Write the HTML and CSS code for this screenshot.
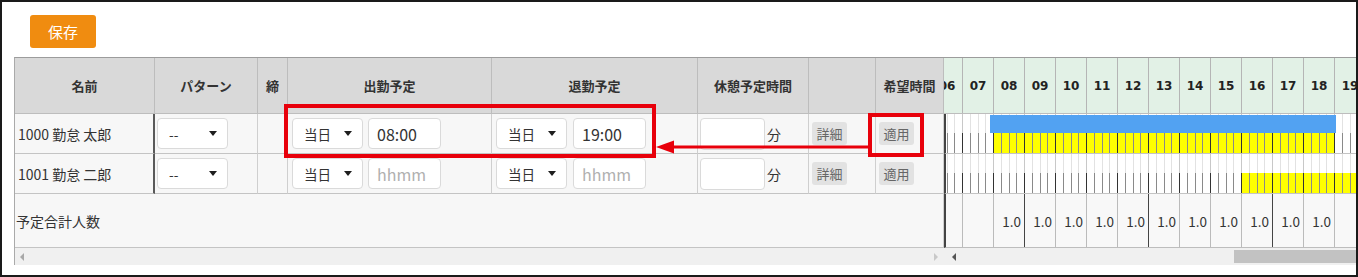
FILE: index.html
```html
<!DOCTYPE html>
<html lang="ja">
<head>
  <meta charset="UTF-8">
  <title>勤務予定</title>
  <link rel="stylesheet" href="styles.css">
</head>
<body>
  <div class="frame">
    <div class="toolbar">
      <button class="save">保存</button>
    </div>

    <div class="sheet">
      <!-- 左側：社員ごとの入力欄 -->
      <div class="lpane">
        <div class="grid">
          <div class="th">名前</div>
          <div class="th">パターン</div>
          <div class="th">締</div>
          <div class="th">出勤予定</div>
          <div class="th">退勤予定</div>
          <div class="th">休憩予定時間</div>
          <div class="th"></div>
          <div class="th">希望時間</div>

          <div class="td name">1000 勤怠 太郎</div>
          <div class="td pat"><span class="sel"><select><option>--</option></select></span></div>
          <div class="td"></div>
          <div class="td tm"><span class="sel"><select><option>当日</option></select></span><input class="inp" value="08:00"></div>
          <div class="td tm out"><span class="sel"><select><option>当日</option></select></span><input class="inp" value="19:00"></div>
          <div class="td rest"><input class="inp short"><span class="unit">分</span></div>
          <div class="td btns"><button class="mini">詳細</button></div>
          <div class="td btns"><button class="mini">適用</button></div>

          <div class="td name">1001 勤怠 二郎</div>
          <div class="td pat"><span class="sel"><select><option>--</option></select></span></div>
          <div class="td"></div>
          <div class="td tm"><span class="sel"><select><option>当日</option></select></span><input class="inp" placeholder="hhmm"></div>
          <div class="td tm out"><span class="sel"><select><option>当日</option></select></span><input class="inp" placeholder="hhmm"></div>
          <div class="td rest"><input class="inp short"><span class="unit">分</span></div>
          <div class="td btns"><button class="mini">詳細</button></div>
          <div class="td btns"><button class="mini">適用</button></div>

          <div class="td total">予定合計人数</div>
        </div>
        <div class="hscroll">
          <span class="arr left"></span>
          <span class="arr right"></span>
        </div>
      </div>

      <!-- 右側：タイムライン -->
      <div class="rpane">
        <div class="ghead">
          <div class="track">
            <div class="h">06</div><div class="h">07</div><div class="h">08</div><div class="h">09</div>
            <div class="h">10</div><div class="h">11</div><div class="h">12</div><div class="h">13</div>
            <div class="h">14</div><div class="h">15</div><div class="h">16</div><div class="h">17</div>
            <div class="h">18</div><div class="h">19</div>
          </div>
        </div>

        <div class="grow">
          <div class="plan"><div class="bar" style="margin-left:59px;width:346px"></div></div>
          <div class="slots">
            <div class="s"></div><div class="s"></div><div class="s on"></div><div class="s on"></div>
            <div class="s on"></div><div class="s on"></div><div class="s on"></div><div class="s on"></div>
            <div class="s on"></div><div class="s on"></div><div class="s on"></div><div class="s on"></div>
            <div class="s on"></div><div class="s"></div><div class="s"></div>
          </div>
        </div>

        <div class="grow">
          <div class="plan"></div>
          <div class="slots">
            <div class="s"></div><div class="s"></div><div class="s"></div><div class="s"></div>
            <div class="s"></div><div class="s"></div><div class="s"></div><div class="s"></div>
            <div class="s"></div><div class="s"></div><div class="s on"></div><div class="s on"></div>
            <div class="s on"></div><div class="s on"></div><div class="s on"></div>
          </div>
        </div>

        <div class="gtotal">
          <div class="track">
            <div class="c"></div><div class="c"></div><div class="c">1.0</div><div class="c major">1.0</div>
            <div class="c">1.0</div><div class="c">1.0</div><div class="c">1.0</div><div class="c major">1.0</div>
            <div class="c">1.0</div><div class="c">1.0</div><div class="c">1.0</div><div class="c major">1.0</div>
            <div class="c">1.0</div><div class="c"></div><div class="c"></div>
          </div>
        </div>

        <div class="hscroll">
          <span class="arr left dark"></span>
          <span class="thumb"></span>
        </div>
      </div>
    </div>

    <!-- 説明用の赤枠と矢印 -->
    <svg class="note" width="1358" height="277" viewBox="0 0 1358 277">
      <rect x="286" y="106" width="368" height="50" fill="none" stroke="#e8000b" stroke-width="4"/>
      <rect x="870" y="115" width="52" height="40" fill="none" stroke="#e8000b" stroke-width="4"/>
      <line x1="670" y1="147" x2="868" y2="147" stroke="#e8000b" stroke-width="3"/>
      <polygon points="656,147 674,140.5 674,153.5" fill="#e8000b"/>
    </svg>
  </div>
</body>
</html>
```

FILE: styles.css
```css
* {
  box-sizing: border-box;
  margin: 0;
  padding: 0;
}

body {
  background-color: #fff;
  font-family: "Noto Sans CJK JP", "Noto Sans", sans-serif;
  font-size: 13px;
  color: #333;
}

.frame {
  position: relative;
  width: 1358px;
  height: 277px;
  border: 2px solid #1a1a1a;
  overflow: hidden;
}

.toolbar {
  height: 55px;
  padding: 13px 0 0 28px;
}

.save {
  display: block;
  width: 66px;
  height: 33px;
  border: 0;
  border-radius: 3px;
  background-color: #f08c10;
  color: #fff;
  font-family: "Noto Sans CJK JP", sans-serif;
  font-size: 15px;
}

.sheet {
  display: flex;
  margin-left: 12px;
  border-top: 1px solid #9c9c9c;
  border-left: 1px solid #aaa;
}

/* 左側 */
.lpane {
  flex: none;
  width: 929px;
}

.grid {
  display: grid;
  grid-template-columns: 140px 103px 30px 204px 206px 111px 67px 68px;
  grid-template-rows: 56px 40px 40px 54px;
}

.th {
  display: flex;
  align-items: center;
  justify-content: center;
  background-color: #d9d9d9;
  border-right: 1px solid #bdbdbd;
  border-bottom: 1px solid #bdbdbd;
  font-weight: bold;
  color: #333;
}

.td {
  display: flex;
  align-items: center;
  background-color: #f7f7f7;
  border-right: 1px solid #cfcfcf;
  border-bottom: 1px solid #c4c4c4;
  font-size: 14px;
}

.td.name {
  padding-left: 3px;
  border-right: 2px solid #5a5a5a;
}

.td.pat {
  padding-left: 2px;
}

.td.tm {
  padding-left: 4px;
  gap: 5px;
}

.td.tm.out {
  gap: 6px;
}

.td.rest {
  padding-left: 2px;
  gap: 2px;
}

.td.btns {
  padding-left: 3px;
}

.td.total {
  grid-column: 1 / -1;
  padding-left: 1px;
}

.sel {
  position: relative;
  display: inline-block;
}

.sel select {
  appearance: none;
  -webkit-appearance: none;
  display: block;
  width: 71px;
  height: 31px;
  padding-left: 11px;
  border: 1px solid #dadada;
  border-radius: 4px;
  background-color: #fff;
  font-family: "Noto Sans CJK JP", sans-serif;
  font-size: 13.5px;
  color: #333;
}

.sel::after {
  content: "";
  position: absolute;
  right: 11px;
  top: 13px;
  border-left: 4px solid transparent;
  border-right: 4px solid transparent;
  border-top: 5px solid #1e1e1e;
}

.inp {
  display: block;
  width: 73px;
  height: 31px;
  padding-left: 8px;
  border: 1px solid #dadada;
  border-radius: 4px;
  background-color: #fff;
  font-family: "Noto Sans CJK JP", sans-serif;
  font-size: 16px;
  color: #333;
}

.inp::placeholder {
  color: #b0b0b0;
}

.inp.short {
  width: 65px;
  height: 32px;
}

.mini {
  width: 35px;
  height: 23px;
  padding: 0;
  border: 0;
  border-radius: 3px;
  background-color: #e2e2e2;
  color: #666;
  font-family: "Noto Sans CJK JP", sans-serif;
  font-size: 13px;
  text-align: center;
}

.hscroll {
  display: flex;
  align-items: center;
  height: 17px;
  background-color: #f0f0f0;
}

.arr {
  width: 0;
  height: 0;
  border-top: 4px solid transparent;
  border-bottom: 4px solid transparent;
}

.arr.left {
  margin-left: 5px;
  border-right: 4px solid #a8a8a8;
}

.arr.right {
  margin-left: auto;
  margin-right: 6px;
  border-left: 4px solid #c8c8c8;
}

.arr.left.dark {
  margin-left: 8px;
  border-right-color: #555;
}

.thumb {
  margin-left: auto;
  width: 124px;
  height: 13px;
  margin-right: -2px;
  background-color: #c2c2c2;
}

/* 右側タイムライン：1時間 = 31px */
.rpane {
  flex: 1;
  min-width: 0;
  overflow: hidden;
}

.ghead {
  height: 56px;
  overflow: hidden;
  background-color: #e2f1e6;
  border-bottom: 1px solid #bdbdbd;
}

.track {
  display: flex;
  height: 100%;
}

.ghead .track {
  margin-left: -13px;
}

.h {
  flex: none;
  display: flex;
  align-items: center;
  justify-content: center;
  width: 31px;
  border-left: 1px solid #b5b5b5;
  font-family: "DejaVu Sans", sans-serif;
  font-weight: bold;
  font-size: 12px;
  color: #222;
}

.grow {
  height: 40px;
  overflow: hidden;
  background-color: #fff;
  border-left: 2px solid #444;
  border-bottom: 1px solid #c4c4c4;
}

.plan {
  height: 19px;
  margin-left: -15px;
  padding-top: 1px;
  background-image: repeating-linear-gradient(to right,
    #c8c8c8 0 1px, transparent 1px 8px,
    #e2e2e2 8px 9px, transparent 9px 16px,
    #e2e2e2 16px 17px, transparent 17px 23px,
    #e2e2e2 23px 24px, transparent 24px 31px);
}

.bar {
  height: 18px;
  background-color: #52a2f2;
}

.slots {
  display: flex;
  height: 20px;
  margin-left: -15px;
}

.s {
  flex: none;
  width: 31px;
  border-left: 1px solid #333;
  background-color: #fff;
  background-image: linear-gradient(to right,
    transparent 0 7px, #8a8a8a 7px 8px,
    transparent 8px 15px, #8a8a8a 15px 16px,
    transparent 16px 22px, #8a8a8a 22px 23px,
    transparent 23px);
}

.s.on {
  background-color: #ffff00;
}

.gtotal {
  height: 54px;
  overflow: hidden;
  background-color: #f8f8f8;
  border-left: 2px solid #444;
  border-bottom: 1px solid #bdbdbd;
}

.gtotal .track {
  margin-left: -15px;
}

.c {
  flex: none;
  display: flex;
  align-items: center;
  justify-content: flex-end;
  width: 31px;
  padding-right: 3px;
  border-left: 1px solid #bbb;
  font-size: 13.5px;
  color: #333;
}

.c.major {
  border-left-color: #444;
}

/* 注釈 */
.note {
  position: absolute;
  left: -2px;
  top: -2px;
  pointer-events: none;
}
```
